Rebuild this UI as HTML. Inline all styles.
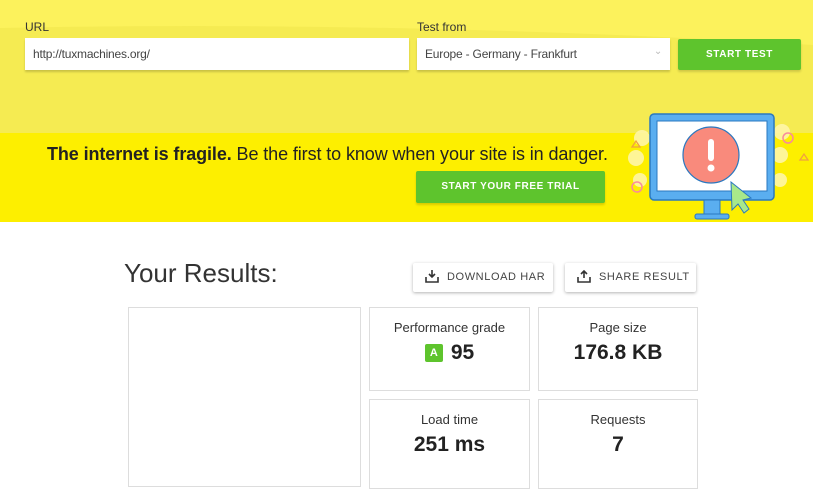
<!DOCTYPE html>
<html><head><meta charset="utf-8"><style>
*{box-sizing:border-box;margin:0;padding:0}
body{width:813px;height:480px;overflow:hidden;background:#fff;font-family:"Liberation Sans",sans-serif;position:relative}
.top{position:absolute;left:0;top:0;width:813px;height:133px;background:#f5eb52;overflow:hidden}
.band{position:absolute;left:0;top:133px;width:813px;height:89px;background:#fdef00}
.lbl{position:absolute;font-size:12px;color:#333;top:20px}
.in{position:absolute;top:38px;height:32px;background:#fff;box-shadow:0 2px 2px rgba(0,0,0,.18);font-size:12px;color:#444;padding:9px 8px;letter-spacing:-.2px}
.btn{position:absolute;background:#5ec42d;color:#fff;font-weight:bold;font-size:10px;letter-spacing:.6px;text-align:center;box-shadow:0 2px 2px rgba(0,0,0,.15);border-radius:2px}
.msg{position:absolute;left:47px;top:144px;font-size:18px;color:#222;letter-spacing:-.1px;white-space:nowrap}
h1{position:absolute;left:124px;top:258px;font-weight:normal;font-size:26px;color:#333;letter-spacing:0}
.ob{position:absolute;top:263px;height:29px;background:#fff;box-shadow:0 1px 3px rgba(0,0,0,.3);border-radius:2px;font-size:11px;color:#444;letter-spacing:.6px;padding:8px 0 0 34px}
.ob svg{position:absolute;left:12px;top:6px}
.card{position:absolute;border:1px solid #ddd;background:#fff;text-align:center}
.card .t{font-size:13px;color:#333;margin-top:12px}
.card .v{font-size:21px;font-weight:bold;color:#222;margin-top:6px}
.g{display:inline-block;width:18px;height:18px;background:#5ec42d;color:#fff;border-radius:2px;font-size:11px;line-height:18px;vertical-align:3px;margin-right:8px}
</style></head><body>
<div class="top"><svg width="813" height="133" style="position:absolute;left:0;top:0"><path d="M0 0H813V45Q400 20 0 28Z" fill="#fcf25c"/></svg></div>
<div class="band"></div>
<div class="lbl" style="left:25px">URL</div>
<div class="lbl" style="left:417px">Test from</div>
<div class="in" style="left:25px;width:384px">http://tuxmachines.org/</div>
<div class="in" style="left:417px;width:253px">Europe - Germany - Frankfurt<span style="position:absolute;right:8px;top:8px;color:#bbb;font-size:10px">&#8964;</span></div>
<div class="btn" style="left:678px;top:39px;width:123px;height:31px;line-height:31px">START TEST</div>
<div class="msg"><b>The internet is fragile.</b> Be the first to know when your site is in danger.</div>
<div class="btn" style="left:416px;top:171px;width:189px;height:32px;line-height:32px">START YOUR FREE TRIAL</div>
<svg style="position:absolute;left:600px;top:100px" width="213" height="125" viewBox="0 0 213 125">
<g fill="#fff6a8" opacity=".9"><circle cx="42" cy="38" r="8"/><circle cx="36" cy="58" r="8"/><circle cx="40" cy="80" r="7"/><circle cx="182" cy="32" r="8"/><circle cx="180" cy="55" r="8"/><circle cx="180" cy="80" r="7"/></g>
<rect x="50" y="14" width="124" height="86" rx="4" fill="#5aaef0" stroke="#2a78c0" stroke-width="1.5"/>
<rect x="57" y="21" width="110" height="70" fill="#fff" stroke="#2a78c0"/>
<circle cx="111" cy="55" r="28" fill="#f98a7c" stroke="#2a78c0" stroke-width="1.2"/>
<rect x="108" y="39" width="6" height="22" rx="3" fill="#fff"/><circle cx="111" cy="68" r="3.5" fill="#fff"/>
<rect x="104" y="100" width="16" height="14" fill="#5aaef0" stroke="#2a78c0"/>
<rect x="95" y="114" width="34" height="5" rx="2" fill="#5aaef0" stroke="#2a78c0"/>
<path d="M131 82 l20 16 l-8 2 l6 9 l-5 4 l-6 -9 l-6 6z" fill="#a8e88a" stroke="#2a78c0"/>
<circle cx="37" cy="87" r="5" fill="none" stroke="#f98a9c" stroke-width="1.5"/>
<circle cx="188" cy="38" r="5" fill="none" stroke="#f98a9c" stroke-width="1.5"/>
<path d="M32 47 l4 -6 l4 6z M200 60 l4 -6 l4 6z" fill="none" stroke="#f0a040" stroke-width="1.3"/>
</svg>
<h1>Your Results:</h1>
<div class="ob" style="left:413px;width:140px"><svg width="14" height="14" viewBox="0 0 14 14"><path d="M1 8v5h12V8M7 1v7M4 5l3 3 3-3" fill="none" stroke="#333" stroke-width="1.6"/></svg>DOWNLOAD HAR</div>
<div class="ob" style="left:565px;width:131px"><svg width="14" height="14" viewBox="0 0 14 14"><path d="M1 8v5h12V8M7 9V2M4 5l3-3 3 3" fill="none" stroke="#333" stroke-width="1.6"/></svg>SHARE RESULT</div>
<div class="card" style="left:128px;top:307px;width:233px;height:180px"></div>
<div class="card" style="left:369px;top:307px;width:161px;height:84px"><div class="t">Performance grade</div><div class="v"><span class="g">A</span>95</div></div>
<div class="card" style="left:538px;top:307px;width:160px;height:84px"><div class="t">Page size</div><div class="v">176.8 KB</div></div>
<div class="card" style="left:369px;top:399px;width:161px;height:90px"><div class="t">Load time</div><div class="v">251 ms</div></div>
<div class="card" style="left:538px;top:399px;width:160px;height:90px"><div class="t">Requests</div><div class="v">7</div></div>
</body></html>
